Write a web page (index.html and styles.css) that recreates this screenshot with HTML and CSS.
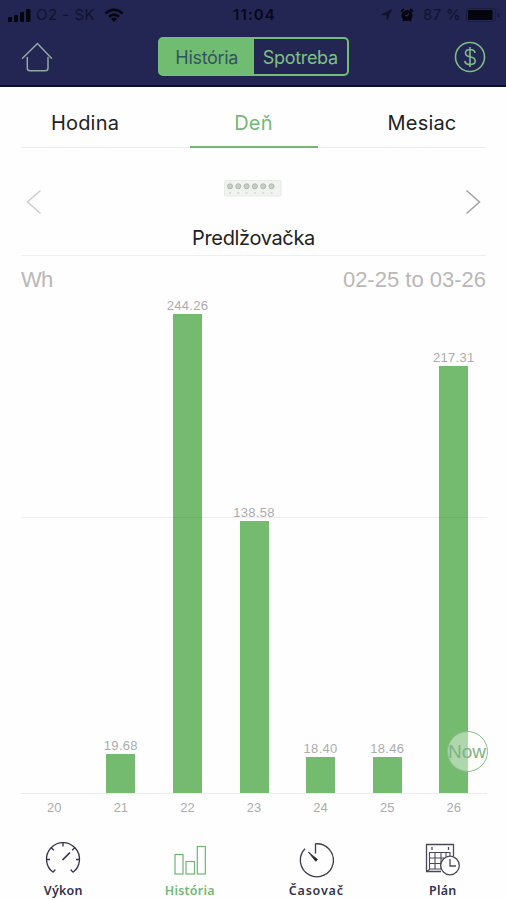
FILE: index.html
```html
<!DOCTYPE html>
<html lang="sk">
<head>
    <meta charset="UTF-8">
    <meta name="viewport" content="width=device-width, initial-scale=1.0">
    <title>História</title>
    <link rel="stylesheet" href="styles.css">
</head>
<body>

    <header class="header">
        <div class="status">
            <div class="status-left">
                <svg width="23" height="13" viewBox="0 0 23 13">
                    <rect x="0" y="8" width="4" height="5" rx="1"/>
                    <rect x="6" y="6" width="4" height="7" rx="1"/>
                    <rect x="12" y="3" width="4" height="10" rx="1"/>
                    <rect x="18" y="0" width="4.5" height="13" rx="1"/>
                </svg>
                <span class="carrier">O2 - SK</span>
                <svg class="wifi" width="20" height="14" viewBox="0 0 20 14">
                    <path d="M1.5 5.5Q10-2 18.5 5.5M5 8.8Q10 4.5 15 8.8" fill="none" stroke="#05050f" stroke-width="2.6"/>
                    <path d="M7 10.8Q10 8.6 13 10.8L10 14Z"/>
                </svg>
            </div>
            <span class="clock">11:04</span>
            <div class="status-right">
                <svg width="11" height="12" viewBox="0 0 11 12">
                    <path d="M.7 5.8L10.3.7 6 11V5.8Z" fill="#11112a" stroke="#11112a" stroke-width=".8"/>
                </svg>
                <svg class="alarm" width="14" height="14" viewBox="0 0 14 14">
                    <circle cx="7" cy="7.5" r="5.5"/>
                    <path d="M1 3.5L4 1M13 3.5L10 1M3 13l1.5-2M11 13l-1.5-2" stroke="#05050f" stroke-width="1.8"/>
                    <path d="M9 5L7 8 5 7" fill="none" stroke="#232652" stroke-width="1.3"/>
                </svg>
                <span class="percent">87 %</span>
                <svg width="35" height="14" viewBox="0 0 35 14">
                    <rect x=".5" y=".5" width="29" height="13" rx="2.5" fill="none" stroke="#1a1c42"/>
                    <rect x="2" y="2" width="24.5" height="10" rx="1"/>
                    <path d="M32.500 5v4" stroke="#14152f" stroke-width="1.5"/>
                </svg>
            </div>
        </div>

        <div class="nav">
            <svg width="32" height="30" viewBox="0 0 32 30" fill="none" stroke="#8fa9a3" stroke-width="1.5" stroke-linecap="round">
                <path d="M1.5 16.3L16.5 1.5 30.5 16.3"/>
                <path d="M6.3 15.500V26Q6.3 28.800 9 28.800H24.300Q27 28.800 27 26V15.500"/>
            </svg>
            <div class="switch">
                <div class="switch-item selected">História</div>
                <div class="switch-item">Spotreba</div>
            </div>
            <svg width="32" height="32" viewBox="0 0 32 32" fill="none" stroke="#7ebc87" stroke-width="1.6">
                <circle cx="16" cy="16" r="14.5"/>
                <path d="M21 12Q20.500 8.500 16 8.500 11.500 8.500 11.500 12 11.500 15 16 15.800 21.200 16.800 21.200 20 21.200 23.500 16 23.500 11.200 23.500 10.800 19.800M16 6V26"/>
            </svg>
        </div>
    </header>

    <div class="tabs">
        <div class="tab">Hodina</div>
        <div class="tab active">Deň</div>
        <div class="tab">Mesiac</div>
    </div>

    <div class="device">
        <svg class="arrow prev" width="16" height="26" viewBox="0 0 16 26">
            <path d="M14.5 1.5L1.5 13 14.5 24.5"/>
        </svg>
        <div class="device-info">
            <svg width="58" height="17" viewBox="0 0 58 17">
                <rect x=".5" y=".5" width="56.5" height="15.5" rx="1" fill="#f0f3ef" stroke="#e8eae7"/>
                <g fill="#c9cec8" stroke="#b0b6af">
                    <circle cx="6" cy="6.3" r="2.5"/>
                    <circle cx="14.3" cy="6.3" r="2.5"/>
                    <circle cx="22.6" cy="6.3" r="2.5"/>
                    <circle cx="30.9" cy="6.3" r="2.5"/>
                    <circle cx="39.2" cy="6.3" r="2.5"/>
                    <circle cx="47.5" cy="6.3" r="2.5"/>
                </g>
                <path d="M5 13h45" stroke="#c5cac4" stroke-dasharray="2 6.3"/>
            </svg>
            <div class="device-name">Predlžovačka</div>
        </div>
        <svg class="arrow next" width="16" height="26" viewBox="0 0 16 26">
            <path d="M1.5 1.5L14.5 13 1.5 24.5"/>
        </svg>
    </div>

    <div class="range">
        <span class="unit">Wh</span>
        <span class="dates">02-25 to 03-26</span>
    </div>

    <div class="chart">
        <div class="bars">
            <div class="col"></div>
            <div class="col"><span class="value">19.68</span><div class="bar" style="height: 39px"></div></div>
            <div class="col"><span class="value">244.26</span><div class="bar" style="height: 479px"></div></div>
            <div class="col"><span class="value">138.58</span><div class="bar" style="height: 272px"></div></div>
            <div class="col"><span class="value">18.40</span><div class="bar" style="height: 36px"></div></div>
            <div class="col"><span class="value">18.46</span><div class="bar" style="height: 36px"></div></div>
            <div class="col"><span class="value">217.31</span><div class="bar" style="height: 427px"></div></div>
            <div class="gridline"></div>
            <div class="now">Now</div>
        </div>
        <div class="days">
            <span>20</span>
            <span>21</span>
            <span>22</span>
            <span>23</span>
            <span>24</span>
            <span>25</span>
            <span>26</span>
        </div>
    </div>

    <nav class="bottom">
        <div class="bottom-item">
            <svg width="36" height="36" viewBox="0 0 36 36" fill="none" stroke="#34324f" stroke-width="1.3">
                <path d="M8 30.300A16.500 16.500 0 1 1 28 30.300"/>
                <path d="M18 1V4.500M1.500 17.500H5M31 17.500h3.500M6.300 5.800l2.500 2.500M29.700 5.800l-2.500 2.500M8 30.300l2.300-2.800M28 30.300l-2.300-2.800"/>
                <path d="M17.500 18L25 10.500" stroke-width="1.7"/>
            </svg>
            <span>Výkon</span>
        </div>
        <div class="bottom-item current">
            <svg width="36" height="36" viewBox="0 0 36 36" fill="none" stroke="#70b574" stroke-width="1.2">
                <rect x="3" y="12.5" width="8" height="19.5"/>
                <rect x="14" y="19.5" width="8.5" height="12.5"/>
                <rect x="25.3" y="4.5" width="8" height="27.5"/>
            </svg>
            <span>História</span>
        </div>
        <div class="bottom-item">
            <svg width="36" height="36" viewBox="0 0 36 36" fill="none" stroke="#3c3a4d" stroke-width="1.3">
                <path d="M7 6.800A16.500 16.500 0 1 0 17.500 1.800V11.500"/>
                <path d="M10.500 10.200L19.500 17.500 17.800 19.300Z" fill="#1b1a26" stroke-width="1"/>
            </svg>
            <span class="wide">Časovač</span>
        </div>
        <div class="bottom-item">
            <svg width="36" height="36" viewBox="0 0 36 36" fill="none" stroke="#4a4859" stroke-width="1.3">
                <path d="M16 29.500H1.500V2.500H28.500V14"/>
                <path d="M4.500 28V10.500H25V14M4.500 16H19M4.500 21.500H16M4.500 27H16M10 10.500v17M16 10.500v17M21 10.500v4M1.500 29.500l3-2" stroke-width="1.1"/>
                <path d="M7 5v3M23.500 5v3"/>
                <circle cx="25" cy="23.5" r="9.300" fill="#fff"/>
                <path d="M25 17V24H31"/>
            </svg>
            <span>Plán</span>
        </div>
    </nav>

</body>
</html>
```
FILE: styles.css
```css
* {
    box-sizing: border-box;
}

body {
    margin: 0;
    width: 506px;
    height: 900px;
    background-color: #fefefe;
    font-family: Inter, 'Liberation Sans', sans-serif;
    color: #222;
    display: flex;
    flex-direction: column;
    overflow: hidden;
}

svg {
    display: block;
    flex: none;
}

.header {
    height: 87px;
    background-color: #232652;
    border-bottom: 2px solid #0e1033;
}

.status {
    height: 28px;
    padding: 0 5px 0 8px;
    display: grid;
    grid-template-columns: 1fr auto 1fr;
    align-items: center;
    font-size: 15px;
    line-height: 30px;
    color: #11122c;
}

.status svg {
    fill: #05050f;
}

.status-left,
.status-right {
    display: flex;
    align-items: center;
}

.status-right {
    justify-content: flex-end;
}

.carrier {
    margin-left: 5px;
    letter-spacing: 0.5px;
}

.wifi {
    margin-left: 9px;
}

.clock {
    font-weight: 600;
    color: #080818;
    letter-spacing: 1.1px;
}

.alarm {
    margin-left: 8px;
}

.percent {
    margin: 0 5px 0 9px;
    letter-spacing: 0.3px;
}

.nav {
    height: 57px;
    padding: 0 20px 0 21px;
    display: flex;
    align-items: center;
    justify-content: space-between;
}

.switch {
    display: flex;
    width: 191px;
    height: 39px;
    border: 2px solid #74bc78;
    border-radius: 5px;
}

.switch-item {
    width: 94px;
    font-size: 18px;
    line-height: 37px;
    height: 35px;
    text-align: center;
    color: #7fbf88;
    letter-spacing: -0.3px;
}

.switch-item.selected {
    background-color: #70bd71;
    color: #33545c;
}

.tabs {
    height: 61px;
    margin: 0 20px 0 21px;
    border-bottom: 1px solid #ececec;
    display: flex;
    justify-content: space-between;
}

.tab {
    width: 128px;
    height: 61px;
    padding-top: 6px;
    font-size: 20px;
    line-height: 61px;
    text-align: center;
    letter-spacing: 0.2px;
}

.tab.active {
    color: #72b975;
    border-bottom: 2px solid #72b975;
}

.device {
    height: 108px;
    margin: 0 20px 0 21px;
    padding: 0 5px;
    border-bottom: 1px solid #efefef;
    display: flex;
    justify-content: space-between;
}

.arrow {
    margin-top: 41px;
    fill: none;
    stroke-width: 1.5;
}

.prev {
    stroke: #ccc;
}

.next {
    stroke: #a2a2a2;
}

.device-info {
    padding-top: 32px;
    display: flex;
    flex-direction: column;
    align-items: center;
}

.device-name {
    margin-top: 26px;
    font-size: 20px;
    line-height: 30px;
    letter-spacing: -0.35px;
}

.range {
    height: 40px;
    padding: 0 20px 0 21px;
    display: flex;
    justify-content: space-between;
    font-family: 'Liberation Sans', sans-serif;
    font-size: 22px;
    line-height: 48px;
    color: #b8b8b8;
}

.unit {
    letter-spacing: -0.8px;
}

.chart {
    padding: 0 19px 0 21px;
    font-family: 'Liberation Sans', sans-serif;
    font-size: 13px;
    color: #acacac;
}

.bars {
    position: relative;
    height: 498px;
    border-bottom: 1px solid #ececec;
    display: flex;
}

.col {
    flex: 1;
    display: flex;
    flex-direction: column;
    justify-content: flex-end;
    align-items: center;
}

.value {
    line-height: 16px;
    letter-spacing: 0.3px;
}

.bar {
    width: 29px;
    flex: none;
    background-color: #74bb70;
}

.gridline {
    position: absolute;
    left: 0;
    right: 0;
    top: 221px;
    height: 1px;
    background-color: rgba(0, 0, 0, 0.06);
}

/* marker over the latest bar */
.now {
    position: absolute;
    right: -1px;
    bottom: 21px;
    width: 41px;
    height: 41px;
    border: 1.5px solid #84bf86;
    border-radius: 50%;
    background-color: rgba(255, 255, 255, 0.42);
    font-size: 19px;
    line-height: 40px;
    text-align: center;
    text-indent: -1px;
    color: #7fb285;
}

.days {
    display: flex;
    line-height: 28px;
}

.days span {
    flex: 1;
    text-align: center;
}

.bottom {
    margin-top: auto;
    height: 58px;
    display: flex;
}

.bottom-item {
    flex: 1;
    display: flex;
    flex-direction: column;
    align-items: center;
    font-family: 'Noto Sans', sans-serif;
    font-size: 12.5px;
    font-weight: 600;
    line-height: 18px;
    letter-spacing: 0.2px;
    color: #35334a;
}

.bottom-item span {
    margin-top: 4px;
}

.bottom-item .wide {
    letter-spacing: 0.8px;
}

.bottom-item.current {
    color: #72b975;
}
```
